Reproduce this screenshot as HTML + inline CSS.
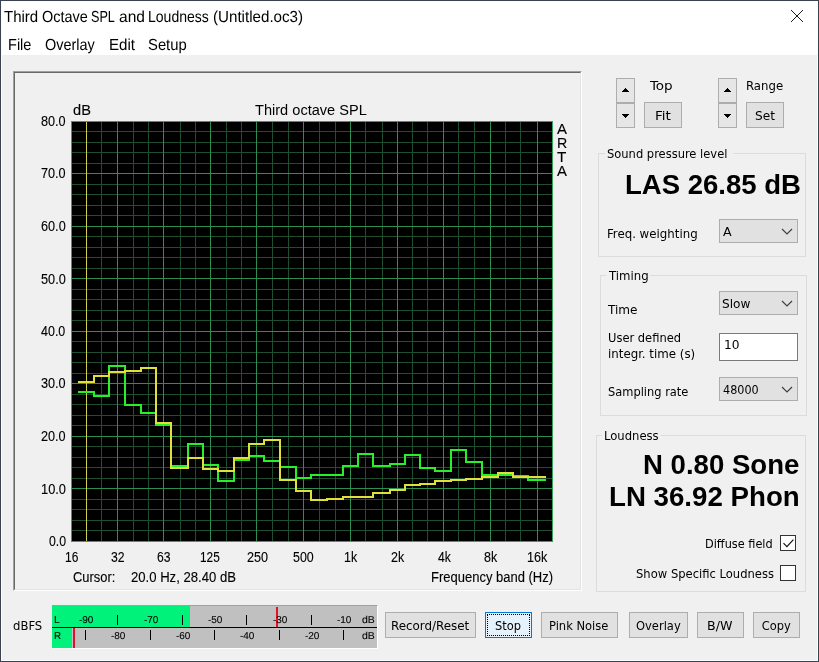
<!DOCTYPE html>
<html lang="en"><head><meta charset="utf-8"><title>Third Octave SPL and Loudness (Untitled.oc3)</title>
<style>
html,body{margin:0;padding:0;background:#f0f0f0;}
body{width:819px;height:662px;overflow:hidden;position:relative;font-family:"Liberation Sans",sans-serif;}
#win{position:absolute;left:0;top:0;width:817px;height:660px;border:1px solid #39434f;background:#f0f0f0;overflow:hidden;}
#in{position:absolute;left:-1px;top:-1px;width:819px;height:662px;will-change:transform;}
#inb{position:absolute;left:1px;top:1px;width:815px;height:658px;border:1px solid #fbfcfd;}
#white{position:absolute;left:1px;top:1px;width:817px;height:54px;background:#fff;}
.panel{position:absolute;left:13px;top:71px;width:565px;height:516px;border-style:solid;border-width:2px;border-color:#696969 #fff #fff #696969;box-sizing:content-box;}
.panel:before{content:"";position:absolute;left:-2px;top:-2px;right:-2px;bottom:-2px;border-style:solid;border-width:1px;border-color:#a0a0a0 #fff #fff #a0a0a0;}
.panel:after{content:"";position:absolute;left:-1px;top:-1px;right:-1px;bottom:-1px;border-style:solid;border-width:1px;border-color:#696969 #e3e3e3 #e3e3e3 #696969;}
.btn{position:absolute;box-sizing:border-box;border:1px solid #adadad;background:#e1e1e1;}
.btn.foc{border-color:#0078d7;background:#e5f1fb;}
.btn.foc:after{content:"";position:absolute;left:1px;top:1px;right:1px;bottom:1px;border:1px dotted #000;}
.spin{position:absolute;box-sizing:border-box;width:19px;height:25px;border:1px solid #adadad;background:#e6e6e6;}
.grp{position:absolute;box-sizing:border-box;border:1px solid #dcdcdc;}
.grplab{position:absolute;background:#f0f0f0;}
.combo{position:absolute;box-sizing:border-box;border:1px solid #adadad;background:#e1e1e1;}
.edit{position:absolute;box-sizing:border-box;border:1px solid #7a7a7a;background:#fff;}
.chk{position:absolute;box-sizing:border-box;width:16px;height:16px;border:1px solid #333;background:#fff;}
.meter{position:absolute;box-sizing:border-box;background:#c0c0c0;border-top:1px solid #a0a0a0;border-bottom:1px solid #fff;border-right:1px solid #fff;}
</style></head>
<body>
<div id="win"><div id="in">
<div id="white"></div><div id="inb"></div>
<div style="position:absolute;top:8px;font-family:'Liberation Sans', sans-serif;text-rendering:geometricPrecision;font-size:16px;line-height:20px;height:20px;white-space:pre;color:#000;left:4.05px;transform-origin:0 0;transform:scaleX(0.9381);">Third</div>
<div style="position:absolute;top:8px;font-family:'Liberation Sans', sans-serif;text-rendering:geometricPrecision;font-size:16px;line-height:20px;height:20px;white-space:pre;color:#000;left:42.28px;transform-origin:0 0;transform:scaleX(0.9030);">Octave</div>
<div style="position:absolute;top:8px;font-family:'Liberation Sans', sans-serif;text-rendering:geometricPrecision;font-size:16px;line-height:20px;height:20px;white-space:pre;color:#000;left:90.90px;transform-origin:0 0;transform:scaleX(0.7901);">SPL</div>
<div style="position:absolute;top:8px;font-family:'Liberation Sans', sans-serif;text-rendering:geometricPrecision;font-size:16px;line-height:20px;height:20px;white-space:pre;color:#000;left:118.78px;transform-origin:0 0;transform:scaleX(0.9705);">and</div>
<div style="position:absolute;top:8px;font-family:'Liberation Sans', sans-serif;text-rendering:geometricPrecision;font-size:16px;line-height:20px;height:20px;white-space:pre;color:#000;left:148.23px;transform-origin:0 0;transform:scaleX(0.8766);">Loudness</div>
<div style="position:absolute;top:8px;font-family:'Liberation Sans', sans-serif;text-rendering:geometricPrecision;font-size:16px;line-height:20px;height:20px;white-space:pre;color:#000;left:213.02px;transform-origin:0 0;transform:scaleX(0.9466);">(Untitled.oc3)</div>
<div style="position:absolute;top:36px;font-family:'Liberation Sans', sans-serif;text-rendering:geometricPrecision;font-size:16px;line-height:20px;height:20px;white-space:pre;color:#000;left:7.59px;transform-origin:0 0;transform:scaleX(0.9083);">File</div>
<div style="position:absolute;top:36px;font-family:'Liberation Sans', sans-serif;text-rendering:geometricPrecision;font-size:16px;line-height:20px;height:20px;white-space:pre;color:#000;left:44.78px;transform-origin:0 0;transform:scaleX(0.9032);">Overlay</div>
<div style="position:absolute;top:36px;font-family:'Liberation Sans', sans-serif;text-rendering:geometricPrecision;font-size:16px;line-height:20px;height:20px;white-space:pre;color:#000;left:108.74px;transform-origin:0 0;transform:scaleX(0.9453);">Edit</div>
<div style="position:absolute;top:36px;font-family:'Liberation Sans', sans-serif;text-rendering:geometricPrecision;font-size:16px;line-height:20px;height:20px;white-space:pre;color:#000;left:148.35px;transform-origin:0 0;transform:scaleX(0.9260);">Setup</div>
<svg style="position:absolute;left:790px;top:9px" width="14" height="14" viewBox="0 0 14 14"><path d="M1 1L13 13M13 1L1 13" stroke="#111" stroke-width="0.95" fill="none"/></svg>
<div class="panel"></div>
<svg class="plot" width="482" height="421" viewBox="71 121 482 421" shape-rendering="crispEdges" style="position:absolute;left:71px;top:121px">
<rect x="71" y="121" width="482" height="421" fill="#000"/>
<path d="M71 131.5H553M71 142.5H553M71 152.5H553M71 163.5H553M71 184.5H553M71 194.5H553M71 205.5H553M71 215.5H553M71 236.5H553M71 247.5H553M71 257.5H553M71 268.5H553M71 289.5H553M71 299.5H553M71 310.5H553M71 320.5H553M71 341.5H553M71 352.5H553M71 362.5H553M71 373.5H553M71 394.5H553M71 404.5H553M71 415.5H553M71 425.5H553M71 446.5H553M71 457.5H553M71 467.5H553M71 478.5H553M71 499.5H553M71 509.5H553M71 520.5H553M71 530.5H553M86.5 121V542M101.5 121V542M133.5 121V542M148.5 121V542M180.5 121V542M195.5 121V542M226.5 121V542M241.5 121V542M272.5 121V542M288.5 121V542M319.5 121V542M335.5 121V542M365.5 121V542M382.5 121V542M412.5 121V542M427.5 121V542M458.5 121V542M474.5 121V542M505.5 121V542M520.5 121V542" stroke="#1e4d30" stroke-width="1" fill="none"/>
<path d="M71 173.5H553M71 226.5H553M71 278.5H553M71 331.5H553M71 383.5H553M71 436.5H553M71 488.5H553M117.5 121V542M163.5 121V542M210.5 121V542M256.5 121V542M303.5 121V542M350.5 121V542M397.5 121V542M443.5 121V542M490.5 121V542M537.5 121V542" stroke="#2e8e50" stroke-width="1" fill="none"/>
<rect x="71.5" y="121.5" width="481" height="420" fill="none" stroke="#38a05c" stroke-width="1"/>
<path d="M86.5 122V541" stroke="#d0d050" stroke-width="1" fill="none"/>
<path d="M78 392L94 392L94 396L109 396L109 366L125 366L125 405L141 405L141 413L156 413L156 425L171 425L171 466L188 466L188 444L203 444L203 465L218 465L218 481L234 481L234 460L249 460L249 456L264 456L264 461L280 461L280 467L296 467L296 478L311 478L311 475L327 475L327 475L343 475L343 466L358 466L358 454L373 454L373 466L390 466L390 464L405 464L405 455L420 455L420 468L435 468L435 471L451 471L451 450L466 450L466 462L482 462L482 475L498 475L498 475L513 475L513 476L528 476L528 480L546 480" fill="none" stroke="#28f028" stroke-width="2" stroke-linejoin="miter" stroke-linecap="butt"/>
<path d="M78 382L94 382L94 376L109 376L109 372L125 372L125 371L141 371L141 368L156 368L156 423L171 423L171 468L188 468L188 458L203 458L203 469L218 469L218 471L234 471L234 458L249 458L249 444L264 444L264 440L280 440L280 480L296 480L296 491L311 491L311 500L327 500L327 499L343 499L343 497L358 497L358 497L373 497L373 493L390 493L390 490L405 490L405 485L420 485L420 484L435 484L435 481L451 481L451 480L466 480L466 479L482 479L482 477L498 477L498 473L513 473L513 477L528 477L528 477L546 477" fill="none" stroke="#e0e038" stroke-width="2" stroke-linejoin="miter" stroke-linecap="butt"/>
</svg>
<div style="position:absolute;top:111px;font-family:'Liberation Sans', sans-serif;font-size:14px;line-height:20px;height:20px;white-space:pre;color:#000;-webkit-text-stroke:0.12px currentColor;left:41.19px;transform-origin:0 0;transform:scaleX(0.9040);">80.0</div>
<div style="position:absolute;top:163px;font-family:'Liberation Sans', sans-serif;font-size:14px;line-height:20px;height:20px;white-space:pre;color:#000;-webkit-text-stroke:0.12px currentColor;left:41.15px;transform-origin:0 0;transform:scaleX(0.9056);">70.0</div>
<div style="position:absolute;top:216px;font-family:'Liberation Sans', sans-serif;font-size:14px;line-height:20px;height:20px;white-space:pre;color:#000;-webkit-text-stroke:0.12px currentColor;left:41.12px;transform-origin:0 0;transform:scaleX(0.9067);">60.0</div>
<div style="position:absolute;top:269px;font-family:'Liberation Sans', sans-serif;font-size:14px;line-height:20px;height:20px;white-space:pre;color:#000;-webkit-text-stroke:0.12px currentColor;left:41.06px;transform-origin:0 0;transform:scaleX(0.9088);">50.0</div>
<div style="position:absolute;top:321px;font-family:'Liberation Sans', sans-serif;font-size:14px;line-height:20px;height:20px;white-space:pre;color:#000;-webkit-text-stroke:0.12px currentColor;left:41.49px;transform-origin:0 0;transform:scaleX(0.8927);">40.0</div>
<div style="position:absolute;top:373px;font-family:'Liberation Sans', sans-serif;font-size:14px;line-height:20px;height:20px;white-space:pre;color:#000;-webkit-text-stroke:0.12px currentColor;left:41.16px;transform-origin:0 0;transform:scaleX(0.9052);">30.0</div>
<div style="position:absolute;top:426px;font-family:'Liberation Sans', sans-serif;font-size:14px;line-height:20px;height:20px;white-space:pre;color:#000;-webkit-text-stroke:0.12px currentColor;left:41.16px;transform-origin:0 0;transform:scaleX(0.9051);">20.0</div>
<div style="position:absolute;top:479px;font-family:'Liberation Sans', sans-serif;font-size:14px;line-height:20px;height:20px;white-space:pre;color:#000;-webkit-text-stroke:0.12px currentColor;left:40.81px;transform-origin:0 0;transform:scaleX(0.9183);">10.0</div>
<div style="position:absolute;top:531px;font-family:'Liberation Sans', sans-serif;font-size:14px;line-height:20px;height:20px;white-space:pre;color:#000;-webkit-text-stroke:0.12px currentColor;left:48.67px;transform-origin:0 0;transform:scaleX(0.8787);">0.0</div>
<div style="position:absolute;top:100px;font-family:'Liberation Sans', sans-serif;font-size:14px;line-height:20px;height:20px;white-space:pre;color:#000;-webkit-text-stroke:0.12px currentColor;left:72.83px;transform-origin:0 0;transform:scaleX(1.0446);">dB</div>
<div style="position:absolute;top:100px;font-family:'Liberation Sans', sans-serif;font-size:15.4px;line-height:20px;height:20px;white-space:pre;color:#000;left:255.26px;transform-origin:0 0;transform:scaleX(0.9473);">Third octave SPL</div>
<div style="position:absolute;top:547px;font-family:'Liberation Sans', sans-serif;font-size:14px;line-height:20px;height:20px;white-space:pre;color:#000;-webkit-text-stroke:0.12px currentColor;left:64.88px;transform-origin:0 0;transform:scaleX(0.8560);">16</div>
<div style="position:absolute;top:547px;font-family:'Liberation Sans', sans-serif;font-size:14px;line-height:20px;height:20px;white-space:pre;color:#000;-webkit-text-stroke:0.12px currentColor;left:110.62px;transform-origin:0 0;transform:scaleX(0.8725);">32</div>
<div style="position:absolute;top:547px;font-family:'Liberation Sans', sans-serif;font-size:14px;line-height:20px;height:20px;white-space:pre;color:#000;-webkit-text-stroke:0.12px currentColor;left:157.39px;transform-origin:0 0;transform:scaleX(0.8675);">63</div>
<div style="position:absolute;top:547px;font-family:'Liberation Sans', sans-serif;font-size:14px;line-height:20px;height:20px;white-space:pre;color:#000;-webkit-text-stroke:0.12px currentColor;left:200.35px;transform-origin:0 0;transform:scaleX(0.8438);">125</div>
<div style="position:absolute;top:547px;font-family:'Liberation Sans', sans-serif;font-size:14px;line-height:20px;height:20px;white-space:pre;color:#000;-webkit-text-stroke:0.12px currentColor;left:246.58px;transform-origin:0 0;transform:scaleX(0.9014);">250</div>
<div style="position:absolute;top:547px;font-family:'Liberation Sans', sans-serif;font-size:14px;line-height:20px;height:20px;white-space:pre;color:#000;-webkit-text-stroke:0.12px currentColor;left:293.45px;transform-origin:0 0;transform:scaleX(0.8875);">500</div>
<div style="position:absolute;top:547px;font-family:'Liberation Sans', sans-serif;font-size:14px;line-height:20px;height:20px;white-space:pre;color:#000;-webkit-text-stroke:0.12px currentColor;left:343.77px;transform-origin:0 0;transform:scaleX(0.8853);">1k</div>
<div style="position:absolute;top:547px;font-family:'Liberation Sans', sans-serif;font-size:14px;line-height:20px;height:20px;white-space:pre;color:#000;-webkit-text-stroke:0.12px currentColor;left:390.66px;transform-origin:0 0;transform:scaleX(0.8904);">2k</div>
<div style="position:absolute;top:547px;font-family:'Liberation Sans', sans-serif;font-size:14px;line-height:20px;height:20px;white-space:pre;color:#000;-webkit-text-stroke:0.12px currentColor;left:437.74px;transform-origin:0 0;transform:scaleX(0.8675);">4k</div>
<div style="position:absolute;top:547px;font-family:'Liberation Sans', sans-serif;font-size:14px;line-height:20px;height:20px;white-space:pre;color:#000;-webkit-text-stroke:0.12px currentColor;left:484.19px;transform-origin:0 0;transform:scaleX(0.8883);">8k</div>
<div style="position:absolute;top:547px;font-family:'Liberation Sans', sans-serif;font-size:14px;line-height:20px;height:20px;white-space:pre;color:#000;-webkit-text-stroke:0.12px currentColor;left:527.18px;transform-origin:0 0;transform:scaleX(0.9006);">16k</div>
<div style="position:absolute;top:567px;font-family:'Liberation Sans', sans-serif;font-size:14px;line-height:20px;height:20px;white-space:pre;color:#000;-webkit-text-stroke:0.12px currentColor;left:72.90px;transform-origin:0 0;transform:scaleX(0.9216);">Cursor:</div>
<div style="position:absolute;top:567px;font-family:'Liberation Sans', sans-serif;font-size:14px;line-height:20px;height:20px;white-space:pre;color:#000;-webkit-text-stroke:0.12px currentColor;left:130.74px;transform-origin:0 0;transform:scaleX(0.9363);">20.0 Hz, 28.40 dB</div>
<div style="position:absolute;top:567px;font-family:'Liberation Sans', sans-serif;font-size:14px;line-height:20px;height:20px;white-space:pre;color:#000;-webkit-text-stroke:0.12px currentColor;left:430.91px;transform-origin:0 0;transform:scaleX(0.9279);">Frequency band (Hz)</div>
<div style="position:absolute;top:119px;font-family:'Liberation Sans', sans-serif;font-size:14px;line-height:20px;height:20px;white-space:pre;color:#000;-webkit-text-stroke:0.12px currentColor;left:556.63px;transform-origin:0 0;transform:scaleX(1.0639);">A</div>
<div style="position:absolute;top:133px;font-family:'Liberation Sans', sans-serif;font-size:14px;line-height:20px;height:20px;white-space:pre;color:#000;-webkit-text-stroke:0.12px currentColor;left:556.71px;transform-origin:0 0;transform:scaleX(1.0150);">R</div>
<div style="position:absolute;top:147px;font-family:'Liberation Sans', sans-serif;font-size:14px;line-height:20px;height:20px;white-space:pre;color:#000;-webkit-text-stroke:0.12px currentColor;left:556.64px;transform-origin:0 0;transform:scaleX(1.0878);">T</div>
<div style="position:absolute;top:161px;font-family:'Liberation Sans', sans-serif;font-size:14px;line-height:20px;height:20px;white-space:pre;color:#000;-webkit-text-stroke:0.12px currentColor;left:556.63px;transform-origin:0 0;transform:scaleX(1.0639);">A</div>
<div class="spin" style="left:616px;top:78px"><svg width="7" height="4" viewBox="0 0 7 4" shape-rendering="crispEdges" style="position:absolute;left:5px;top:9px"><path d="M3 0h1v1h1v1h1v1h1v1h-7v-1h1v-1h1v-1h1z" fill="#000"/></svg></div><div class="spin" style="left:616px;top:103px;"><svg width="7" height="4" viewBox="0 0 7 4" shape-rendering="crispEdges" style="position:absolute;left:5px;top:10px"><path d="M0 0h7v1h-1v1h-1v1h-1v1h-1v-1h-1v-1h-1v-1h-1z" fill="#000"/></svg></div>
<div class="spin" style="left:718px;top:78px"><svg width="7" height="4" viewBox="0 0 7 4" shape-rendering="crispEdges" style="position:absolute;left:5px;top:9px"><path d="M3 0h1v1h1v1h1v1h1v1h-7v-1h1v-1h1v-1h1z" fill="#000"/></svg></div><div class="spin" style="left:718px;top:103px;"><svg width="7" height="4" viewBox="0 0 7 4" shape-rendering="crispEdges" style="position:absolute;left:5px;top:10px"><path d="M0 0h7v1h-1v1h-1v1h-1v1h-1v-1h-1v-1h-1v-1h-1z" fill="#000"/></svg></div>
<div style="position:absolute;top:76px;font-family:'DejaVu Sans Condensed', 'DejaVu Sans', 'Liberation Sans', sans-serif;font-size:12.7px;line-height:20px;height:20px;white-space:pre;color:#000;font-stretch:condensed;left:650.20px;transform-origin:0 0;transform:scaleX(1.1834);">Top</div>
<div style="position:absolute;top:76px;font-family:'DejaVu Sans Condensed', 'DejaVu Sans', 'Liberation Sans', sans-serif;font-size:12.7px;line-height:20px;height:20px;white-space:pre;color:#000;font-stretch:condensed;left:746.23px;transform-origin:0 0;transform:scaleX(1.0260);">Range</div>
<div class="btn" style="left:644px;top:102px;width:38px;height:26px"></div><div style="position:absolute;top:106px;font-family:'DejaVu Sans Condensed', 'DejaVu Sans', 'Liberation Sans', sans-serif;font-size:12.7px;line-height:20px;height:20px;white-space:pre;color:#000;font-stretch:condensed;left:654.94px;transform-origin:0 0;transform:scaleX(1.1868);">Fit</div>
<div class="btn" style="left:746px;top:102px;width:38px;height:26px"></div><div style="position:absolute;top:106px;font-family:'DejaVu Sans Condensed', 'DejaVu Sans', 'Liberation Sans', sans-serif;font-size:12.7px;line-height:20px;height:20px;white-space:pre;color:#000;font-stretch:condensed;left:754.76px;transform-origin:0 0;transform:scaleX(1.0649);">Set</div>
<div class="grp" style="left:598px;top:153px;width:208px;height:104px"></div><div class="grplab" style="left:605px;top:151px;width:128px;height:5px"></div>
<div style="position:absolute;top:144px;font-family:'DejaVu Sans Condensed', 'DejaVu Sans', 'Liberation Sans', sans-serif;font-size:12.7px;line-height:20px;height:20px;white-space:pre;color:#000;font-stretch:condensed;left:607.10px;transform-origin:0 0;transform:scaleX(1.0069);">Sound pressure level</div>
<div style="position:absolute;top:164px;font-family:'Liberation Sans', sans-serif;font-size:28.4px;line-height:40px;height:40px;white-space:pre;color:#000;font-weight:bold;left:624.66px;transform-origin:0 0;transform:scaleX(0.9699);">LAS 26.85 dB</div>
<div style="position:absolute;top:224px;font-family:'DejaVu Sans Condensed', 'DejaVu Sans', 'Liberation Sans', sans-serif;font-size:12.7px;line-height:20px;height:20px;white-space:pre;color:#000;font-stretch:condensed;left:607.02px;transform-origin:0 0;transform:scaleX(1.0332);">Freq. weighting</div>
<div class="combo" style="left:719px;top:219px;width:79px;height:24px"></div><div style="position:absolute;top:222px;font-family:'DejaVu Sans Condensed', 'DejaVu Sans', 'Liberation Sans', sans-serif;font-size:12.7px;line-height:20px;height:20px;white-space:pre;color:#000;font-stretch:condensed;left:722.88px;transform-origin:0 0;transform:scaleX(1.1051);">A</div><svg style="position:absolute;left:781px;top:228px" width="12" height="7" viewBox="0 0 12 7"><path d="M1 1L6 6L11 1" stroke="#3c3c3c" stroke-width="1.1" fill="none"/></svg>
<div class="grp" style="left:600px;top:275px;width:207px;height:141px"></div><div class="grplab" style="left:606px;top:273px;width:44px;height:5px"></div>
<div style="position:absolute;top:266px;font-family:'DejaVu Sans Condensed', 'DejaVu Sans', 'Liberation Sans', sans-serif;font-size:12.7px;line-height:20px;height:20px;white-space:pre;color:#000;font-stretch:condensed;left:609.40px;transform-origin:0 0;transform:scaleX(1.0277);">Timing</div>
<div style="position:absolute;top:300px;font-family:'DejaVu Sans Condensed', 'DejaVu Sans', 'Liberation Sans', sans-serif;font-size:12.7px;line-height:20px;height:20px;white-space:pre;color:#000;font-stretch:condensed;left:608.20px;transform-origin:0 0;transform:scaleX(1.0565);">Time</div>
<div class="combo" style="left:719px;top:291px;width:79px;height:24px"></div><div style="position:absolute;top:294px;font-family:'DejaVu Sans Condensed', 'DejaVu Sans', 'Liberation Sans', sans-serif;font-size:12.7px;line-height:20px;height:20px;white-space:pre;color:#000;font-stretch:condensed;left:722.46px;transform-origin:0 0;transform:scaleX(1.0648);">Slow</div><svg style="position:absolute;left:781px;top:300px" width="12" height="7" viewBox="0 0 12 7"><path d="M1 1L6 6L11 1" stroke="#3c3c3c" stroke-width="1.1" fill="none"/></svg>
<div style="position:absolute;top:328px;font-family:'DejaVu Sans Condensed', 'DejaVu Sans', 'Liberation Sans', sans-serif;font-size:12.7px;line-height:20px;height:20px;white-space:pre;color:#000;font-stretch:condensed;left:607.69px;transform-origin:0 0;transform:scaleX(1.0062);">User defined</div>
<div style="position:absolute;top:344px;font-family:'DejaVu Sans Condensed', 'DejaVu Sans', 'Liberation Sans', sans-serif;font-size:12.7px;line-height:20px;height:20px;white-space:pre;color:#000;font-stretch:condensed;left:607.57px;transform-origin:0 0;transform:scaleX(1.0353);">integr. time (s)</div>
<div class="edit" style="left:719px;top:333px;width:79px;height:28px"></div>
<div style="position:absolute;top:335px;font-family:'DejaVu Sans Condensed', 'DejaVu Sans', 'Liberation Sans', sans-serif;font-size:12.7px;line-height:20px;height:20px;white-space:pre;color:#000;font-stretch:condensed;left:723.97px;transform-origin:0 0;transform:scaleX(1.0676);">10</div>
<div style="position:absolute;top:382px;font-family:'DejaVu Sans Condensed', 'DejaVu Sans', 'Liberation Sans', sans-serif;font-size:12.7px;line-height:20px;height:20px;white-space:pre;color:#000;font-stretch:condensed;left:607.91px;transform-origin:0 0;transform:scaleX(1.0018);">Sampling rate</div>
<div class="combo" style="left:719px;top:377px;width:79px;height:24px"></div><div style="position:absolute;top:380px;font-family:'DejaVu Sans Condensed', 'DejaVu Sans', 'Liberation Sans', sans-serif;font-size:12.7px;line-height:20px;height:20px;white-space:pre;color:#000;font-stretch:condensed;left:722.74px;transform-origin:0 0;transform:scaleX(0.9829);">48000</div><svg style="position:absolute;left:781px;top:386px" width="12" height="7" viewBox="0 0 12 7"><path d="M1 1L6 6L11 1" stroke="#3c3c3c" stroke-width="1.1" fill="none"/></svg>
<div class="grp" style="left:596px;top:435px;width:210px;height:157px"></div><div class="grplab" style="left:602px;top:433px;width:59px;height:5px"></div>
<div style="position:absolute;top:426px;font-family:'DejaVu Sans Condensed', 'DejaVu Sans', 'Liberation Sans', sans-serif;font-size:12.7px;line-height:20px;height:20px;white-space:pre;color:#000;font-stretch:condensed;left:604.44px;transform-origin:0 0;transform:scaleX(1.0171);">Loudness</div>
<div style="position:absolute;top:444px;font-family:'Liberation Sans', sans-serif;font-size:28.4px;line-height:40px;height:40px;white-space:pre;color:#000;font-weight:bold;left:642.76px;transform-origin:0 0;transform:scaleX(0.9715);">N 0.80 Sone</div>
<div style="position:absolute;top:476px;font-family:'Liberation Sans', sans-serif;font-size:28.4px;line-height:40px;height:40px;white-space:pre;color:#000;font-weight:bold;left:608.85px;transform-origin:0 0;transform:scaleX(0.9749);">LN 36.92 Phon</div>
<div style="position:absolute;top:534px;font-family:'DejaVu Sans Condensed', 'DejaVu Sans', 'Liberation Sans', sans-serif;font-size:12.7px;line-height:20px;height:20px;white-space:pre;color:#000;font-stretch:condensed;left:704.56px;transform-origin:0 0;transform:scaleX(0.9913);">Diffuse field</div>
<div style="position:absolute;top:564px;font-family:'DejaVu Sans Condensed', 'DejaVu Sans', 'Liberation Sans', sans-serif;font-size:12.7px;line-height:20px;height:20px;white-space:pre;color:#000;font-stretch:condensed;left:635.70px;transform-origin:0 0;transform:scaleX(1.0131);">Show Specific Loudness</div>
<div class="chk" style="left:780px;top:535px"><svg width="16" height="16" viewBox="0 0 16 16" style="position:absolute;left:-1px;top:-1px"><path d="M3.5 8.2L6.9 11.6L13.4 4.6" stroke="#111" stroke-width="1.2" fill="none"/></svg></div>
<div class="chk" style="left:780px;top:565px"></div>
<div style="position:absolute;top:616px;font-family:'DejaVu Sans Condensed', 'DejaVu Sans', 'Liberation Sans', sans-serif;font-size:12.7px;line-height:20px;height:20px;white-space:pre;color:#000;font-stretch:condensed;left:12.73px;transform-origin:0 0;transform:scaleX(1.0204);">dBFS</div>
<div class="meter" style="left:52px;top:605px;width:326px;height:44px"></div>
<div style="position:absolute;left:52px;top:606px;width:138px;height:21px;background:#00f27a"></div>
<div style="position:absolute;left:52px;top:628px;width:20px;height:20px;background:#00f27a"></div>
<div style="position:absolute;left:52px;top:627px;width:325px;height:1px;background:#000"></div>
<div style="position:absolute;left:73px;top:628px;width:2px;height:20px;background:#d81428"></div>
<div style="position:absolute;left:276px;top:607px;width:2px;height:20px;background:#e01428"></div>
<div style="position:absolute;left:85px;top:630px;width:1px;height:10px;background:#000"></div>
<div style="position:absolute;top:611px;font-family:'Liberation Sans', sans-serif;text-rendering:geometricPrecision;font-size:10px;line-height:20px;height:20px;white-space:pre;color:#000;-webkit-text-stroke:0.1px currentColor;left:78.90px;transform-origin:0 0;">-90</div>
<div style="position:absolute;left:117px;top:615px;width:1px;height:10px;background:#000"></div>
<div style="position:absolute;top:627px;font-family:'Liberation Sans', sans-serif;text-rendering:geometricPrecision;font-size:10px;line-height:20px;height:20px;white-space:pre;color:#000;-webkit-text-stroke:0.1px currentColor;left:110.90px;transform-origin:0 0;">-80</div>
<div style="position:absolute;left:150px;top:630px;width:1px;height:10px;background:#000"></div>
<div style="position:absolute;top:611px;font-family:'Liberation Sans', sans-serif;text-rendering:geometricPrecision;font-size:10px;line-height:20px;height:20px;white-space:pre;color:#000;-webkit-text-stroke:0.1px currentColor;left:143.90px;transform-origin:0 0;">-70</div>
<div style="position:absolute;left:182px;top:615px;width:1px;height:10px;background:#000"></div>
<div style="position:absolute;top:627px;font-family:'Liberation Sans', sans-serif;text-rendering:geometricPrecision;font-size:10px;line-height:20px;height:20px;white-space:pre;color:#000;-webkit-text-stroke:0.1px currentColor;left:175.90px;transform-origin:0 0;">-60</div>
<div style="position:absolute;left:214px;top:630px;width:1px;height:10px;background:#000"></div>
<div style="position:absolute;top:611px;font-family:'Liberation Sans', sans-serif;text-rendering:geometricPrecision;font-size:10px;line-height:20px;height:20px;white-space:pre;color:#000;-webkit-text-stroke:0.1px currentColor;left:207.90px;transform-origin:0 0;">-50</div>
<div style="position:absolute;left:246px;top:615px;width:1px;height:10px;background:#000"></div>
<div style="position:absolute;top:627px;font-family:'Liberation Sans', sans-serif;text-rendering:geometricPrecision;font-size:10px;line-height:20px;height:20px;white-space:pre;color:#000;-webkit-text-stroke:0.1px currentColor;left:239.90px;transform-origin:0 0;">-40</div>
<div style="position:absolute;left:279px;top:630px;width:1px;height:10px;background:#000"></div>
<div style="position:absolute;top:611px;font-family:'Liberation Sans', sans-serif;text-rendering:geometricPrecision;font-size:10px;line-height:20px;height:20px;white-space:pre;color:#000;-webkit-text-stroke:0.1px currentColor;left:272.90px;transform-origin:0 0;">-30</div>
<div style="position:absolute;left:311px;top:615px;width:1px;height:10px;background:#000"></div>
<div style="position:absolute;top:627px;font-family:'Liberation Sans', sans-serif;text-rendering:geometricPrecision;font-size:10px;line-height:20px;height:20px;white-space:pre;color:#000;-webkit-text-stroke:0.1px currentColor;left:304.90px;transform-origin:0 0;">-20</div>
<div style="position:absolute;left:343px;top:630px;width:1px;height:10px;background:#000"></div>
<div style="position:absolute;top:611px;font-family:'Liberation Sans', sans-serif;text-rendering:geometricPrecision;font-size:10px;line-height:20px;height:20px;white-space:pre;color:#000;-webkit-text-stroke:0.1px currentColor;left:336.90px;transform-origin:0 0;">-10</div>
<div style="position:absolute;top:611px;font-family:'Liberation Sans', sans-serif;text-rendering:geometricPrecision;font-size:10px;line-height:20px;height:20px;white-space:pre;color:#000;-webkit-text-stroke:0.1px currentColor;left:54.16px;transform-origin:0 0;transform:scaleX(1.0117);">L</div>
<div style="position:absolute;top:627px;font-family:'Liberation Sans', sans-serif;text-rendering:geometricPrecision;font-size:10px;line-height:20px;height:20px;white-space:pre;color:#000;-webkit-text-stroke:0.1px currentColor;left:54.19px;transform-origin:0 0;transform:scaleX(0.9815);">R</div>
<div style="position:absolute;top:611px;font-family:'Liberation Sans', sans-serif;text-rendering:geometricPrecision;font-size:10px;line-height:20px;height:20px;white-space:pre;color:#000;-webkit-text-stroke:0.1px currentColor;left:362.20px;transform-origin:0 0;transform:scaleX(1.0527);">dB</div>
<div style="position:absolute;top:627px;font-family:'Liberation Sans', sans-serif;text-rendering:geometricPrecision;font-size:10px;line-height:20px;height:20px;white-space:pre;color:#000;-webkit-text-stroke:0.1px currentColor;left:362.20px;transform-origin:0 0;transform:scaleX(1.0527);">dB</div>
<div class="btn" style="left:385px;top:612px;width:91px;height:26px"></div><div style="position:absolute;top:616px;font-family:'DejaVu Sans Condensed', 'DejaVu Sans', 'Liberation Sans', sans-serif;font-size:12.7px;line-height:20px;height:20px;white-space:pre;color:#000;font-stretch:condensed;left:391.41px;transform-origin:0 0;transform:scaleX(1.0430);">Record/Reset</div>
<div class="btn foc" style="left:485px;top:612px;width:47px;height:26px"></div><div style="position:absolute;top:616px;font-family:'DejaVu Sans Condensed', 'DejaVu Sans', 'Liberation Sans', sans-serif;font-size:12.7px;line-height:20px;height:20px;white-space:pre;color:#000;font-stretch:condensed;left:495.00px;transform-origin:0 0;transform:scaleX(1.0063);">Stop</div>
<div class="btn" style="left:541px;top:612px;width:77px;height:26px"></div><div style="position:absolute;top:616px;font-family:'DejaVu Sans Condensed', 'DejaVu Sans', 'Liberation Sans', sans-serif;font-size:12.7px;line-height:20px;height:20px;white-space:pre;color:#000;font-stretch:condensed;left:548.85px;transform-origin:0 0;transform:scaleX(1.0076);">Pink Noise</div>
<div class="btn" style="left:629px;top:612px;width:59px;height:26px"></div><div style="position:absolute;top:616px;font-family:'DejaVu Sans Condensed', 'DejaVu Sans', 'Liberation Sans', sans-serif;font-size:12.7px;line-height:20px;height:20px;white-space:pre;color:#000;font-stretch:condensed;left:636.31px;transform-origin:0 0;transform:scaleX(1.0081);">Overlay</div>
<div class="btn" style="left:697px;top:612px;width:47px;height:26px"></div><div style="position:absolute;top:616px;font-family:'DejaVu Sans Condensed', 'DejaVu Sans', 'Liberation Sans', sans-serif;font-size:12.7px;line-height:20px;height:20px;white-space:pre;color:#000;font-stretch:condensed;left:706.93px;transform-origin:0 0;transform:scaleX(1.1075);">B/W</div>
<div class="btn" style="left:753px;top:612px;width:47px;height:26px"></div><div style="position:absolute;top:616px;font-family:'DejaVu Sans Condensed', 'DejaVu Sans', 'Liberation Sans', sans-serif;font-size:12.7px;line-height:20px;height:20px;white-space:pre;color:#000;font-stretch:condensed;left:761.82px;transform-origin:0 0;">Copy</div>
</div></div>
</body></html>
